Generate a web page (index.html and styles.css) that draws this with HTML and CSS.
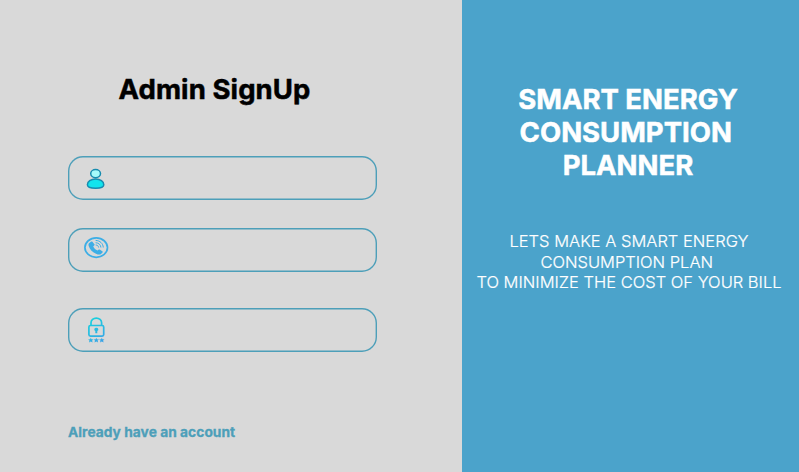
FILE: index.html
```html
<!DOCTYPE html>
<html lang="en">
<head>
<meta charset="utf-8">
<title>Admin SignUp</title>
<link rel="stylesheet" href="styles.css">
</head>
<body>
<main class="page">
  <form class="signup">
    <h1 class="title">Admin SignUp</h1>
    <label class="field">
      <svg class="icon" viewBox="0 0 32 32" aria-hidden="true">
        <ellipse class="head" cx="15.6" cy="10.6" rx="4.9" ry="4.1"/>
        <path class="body" d="M15.6 16.1c-4.700 0-8.200 2.500-8.200 5.600 0 2.500 3.300 3.500 8.200 3.500s8.200-1 8.200-3.500c0-3.100-3.500-5.600-8.200-5.600z"/>
      </svg>
      <input class="input" type="text" aria-label="Name">
    </label>
    <label class="field">
      <svg class="icon" viewBox="0 0 32 32" aria-hidden="true">
        <ellipse class="ring" cx="16.200" cy="15.600" rx="11.300" ry="9.700"/>
        <path class="handset" d="M9.300 10.900l1.900-1.300c.6-.3 1-.2 1.400.3l1.800 2.300c.4.600.2 1-.3 1.400l-.9.800c1 2 2.300 3.200 4.300 4.100l1-.8c.5-.4 1-.4 1.500 0l2.300 1.600c.6.400.6.900.2 1.300l-1.500 1.400c-1 .9-2.800.7-5-.3-3.900-1.900-6.300-4.500-7.300-7.800-.4-1.400-.2-2.400.6-3z"/>
        <path class="waves" d="M15.600 8.400c4.400.2 7.400 3 7.700 7.100M15.600 10.700c3.100.2 5.100 2 5.300 4.800M15.700 13c1.700.1 2.800 1 2.900 2.500"/>
      </svg>
      <input class="input" type="tel" aria-label="Phone">
    </label>
    <label class="field field-password">
      <svg class="icon icon-lock" viewBox="0 0 32 36" aria-hidden="true">
        <defs>
          <linearGradient id="lock" gradientUnits="userSpaceOnUse" x1="8" y1="8" x2="24" y2="32">
            <stop offset="0" stop-color="#17d3dd"/>
            <stop offset="1" stop-color="#3d9de8"/>
          </linearGradient>
        </defs>
        <g fill="none" stroke="url(#lock)" stroke-width="1.700">
          <path d="M11 13.500v-2.700a5.300 4.700 0 0 1 10.600 0v2.700"/>
          <rect x="8.900" y="13.500" width="14.800" height="10.700" rx="1.600"/>
        </g>
        <g fill="url(#lock)">
          <path d="M16.300 15.700a1.900 1.700 0 0 1 1 3.200v2.400h-2v-2.400a1.900 1.700 0 0 1 1-3.200z"/>
          <path d="M10.800 25.700l.7 1.600 2 .1-1.400 1.200.5 1.900-1.800-1-1.800 1 .5-1.900-1.400-1.200 2-.1z"/>
          <path d="M16.300 25.700l.7 1.600 2 .1-1.400 1.200.5 1.900-1.800-1-1.800 1 .5-1.900-1.400-1.200 2-.1z"/>
          <path d="M21.800 25.700l.7 1.600 2 .1-1.400 1.200.5 1.900-1.800-1-1.800 1 .5-1.900-1.400-1.200 2-.1z"/>
        </g>
      </svg>
      <input class="input" type="password" aria-label="Password">
    </label>
    <a class="login-link">Already have an account</a>
  </form>
  <section class="intro">
    <h2 class="intro-title">SMART ENERGY<br><span class="trail">CONSUMPTION</span><br>PLANNER</h2>
    <p class="intro-text">LETS MAKE A SMART ENERGY<br><span class="trail">CONSUMPTION PLAN</span><br>TO MINIMIZE THE COST OF YOUR BILL</p>
  </section>
</main>
</body>
</html>
```

FILE: styles.css
```css
* {
  box-sizing: border-box;
}

body {
  margin: 0;
  font-family: Inter, "Liberation Sans", sans-serif;
}

.page {
  display: flex;
  width: 799px;
  height: 472px;
  background: #d9d9d9;
}

.signup {
  display: flex;
  flex-direction: column;
  width: 462px;
  padding: 73px 85px 0 68px;
}

.title {
  margin: 0 0 50.400px;
  padding-right: 16px;
  font-size: 27.500px;
  font-weight: 700;
  letter-spacing: 0.1px;
  line-height: 33px;
  text-align: center;
  white-space: nowrap;
  -webkit-text-stroke: 0.5px currentColor;
}

.field {
  display: flex;
  flex: none;
  height: 44px;
  width: 309px;
  margin-bottom: 27.700px;
  padding-left: 11.700px;
  border-radius: 15px;
  box-shadow: inset 0 0 0 1.400px #4d9fb9;
}

.field-password {
  margin-top: 8px;
  margin-bottom: 72px;
}

.icon {
  flex: none;
  width: 32px;
  height: 32px;
  margin-top: 7px;
}

.field + .field .icon {
  margin-top: 4px;
}

.field-password .icon-lock {
  height: 36px;
}

.head,
.body {
  fill: #a5fbfb;
  stroke: #178caf;
  stroke-width: 1.500;
}

.body {
  fill: #12e4ed;
}

.ring,
.waves {
  fill: none;
  stroke: #3caee6;
  stroke-width: 1.700;
}

.waves {
  stroke-width: 1;
}

.handset {
  fill: #3caee6;
}

.input {
  flex: 1;
  min-width: 0;
  border: 0;
  outline: 0;
  background: transparent;
  font: inherit;
}

.login-link {
  color: #4d9fb9;
  font-size: 13.750px;
  font-weight: 700;
  letter-spacing: 0.04px;
  line-height: 17px;
  -webkit-text-stroke: 0.3px currentColor;
}

.intro {
  width: 337px;
  padding-top: 83px;
  background: #4ba3cb;
  color: #fff;
  text-align: center;
  white-space: nowrap;
}

.intro-title {
  margin: 0 0 49px;
  padding-right: 5px;
  font-size: 27.500px;
  font-weight: 700;
  line-height: 33px;
  -webkit-text-stroke: 0.5px currentColor;
}

.trail {
  padding-right: 4.500px;
}

.intro-text {
  margin: 0;
  padding-right: 3px;
  font-size: 16.500px;
  font-weight: 300;
  line-height: 20.500px;
  -webkit-text-stroke: 0.2px currentColor;
}
```
